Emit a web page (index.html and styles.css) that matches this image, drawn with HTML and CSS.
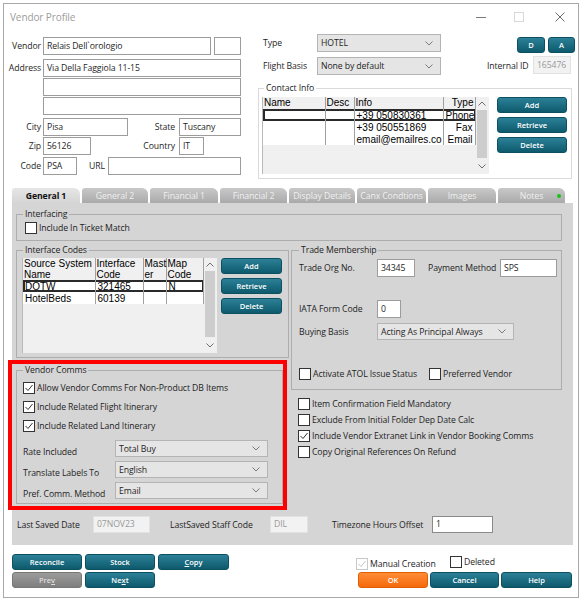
FILE: index.html
```html
<!DOCTYPE html>
<html lang="en">

<head>
  <meta charset="UTF-8">
  <meta name="viewport" content="width=device-width, initial-scale=1.0">
  <title>Vendor Profile</title>
  <link rel="stylesheet" href="styles.css">
</head>

<body>

  <div class="window">

    <!-- title bar -->
    <div class="titlebar">
      <span class="titlebar__text">Vendor Profile</span>
      <div class="titlebar__controls">
        <svg class="ctl ctl--min" width="10" height="10" viewBox="0 0 10 10"><path d="M0 5.5H10" stroke="#7a7a7a" /></svg>
        <svg class="ctl ctl--max" width="10" height="10" viewBox="0 0 10 10"><rect x="0.5" y="0.5" width="9" height="9" fill="none" stroke="#d8d8d8" /></svg>
        <svg class="ctl ctl--close" width="10" height="10" viewBox="0 0 10 10"><path d="M0.5 0.5L9.5 9.5M9.5 0.5L0.5 9.5" stroke="#6a6a6a" /></svg>
      </div>
    </div>

    <!-- vendor details -->
    <div class="header">
      <div class="address">
        <div class="row">
          <span class="lbl">Vendor</span>
          <span class="field vendor-name">Relais Dell`orologio</span>
          <span class="field vendor-suffix"></span>
        </div>
        <div class="row row--address">
          <span class="lbl">Address</span>
          <span class="field address-line">Via Della Faggiola 11-15</span>
        </div>
        <div class="row row--tight">
          <span class="lbl"></span>
          <span class="field address-line"></span>
        </div>
        <div class="row row--tight">
          <span class="lbl"></span>
          <span class="field address-line"></span>
        </div>
        <div class="row row--city">
          <span class="lbl">City</span>
          <span class="field city">Pisa</span>
          <span class="lbl-inline state-lbl">State</span>
          <span class="field state">Tuscany</span>
        </div>
        <div class="row row--tight">
          <span class="lbl">Zip</span>
          <span class="field zip">56126</span>
          <span class="lbl-inline country-lbl">Country</span>
          <span class="field country">IT</span>
        </div>
        <div class="row row--code">
          <span class="lbl">Code</span>
          <span class="field code">PSA</span>
          <span class="lbl-inline url-lbl">URL</span>
          <span class="field url"></span>
        </div>
      </div>

      <div class="type-col">
        <div class="row">
          <span class="lbl-type">Type</span>
          <span class="select type-select">HOTEL<svg width="8" height="5" viewBox="0 0 8 5"><path d="M0.5 0.5L4 4L7.5 0.5" fill="none" stroke="#7b7b7b" /></svg></span>
          <span class="btn btn--sq btn--d">D</span>
          <span class="btn btn--sq btn--a">A</span>
        </div>
        <div class="row row--flight">
          <span class="lbl-type">Flight Basis</span>
          <span class="select type-select">None by default<svg width="8" height="5" viewBox="0 0 8 5"><path d="M0.5 0.5L4 4L7.5 0.5" fill="none" stroke="#7b7b7b" /></svg></span>
          <span class="internal-lbl">Internal ID</span>
          <span class="field field--disabled internal-id">165476</span>
        </div>

        <fieldset class="group contact">
          <legend>Contact Info</legend>
          <div class="group__body">
            <div class="grid contact-grid">
              <table>
                <colgroup><col style="width:62px"><col style="width:29px"><col style="width:89px"><col style="width:32px"></colgroup>
                <thead>
                  <tr><th>Name</th><th>Desc</th><th>Info</th><th class="num">Type</th></tr>
                </thead>
                <tbody>
                  <tr class="is-selected"><td></td><td></td><td>+39 050830361</td><td class="num">Phone</td></tr>
                  <tr><td></td><td></td><td>+39 050551869</td><td class="num">Fax</td></tr>
                  <tr><td></td><td></td><td>email@emailres.co</td><td class="num">Email</td></tr>
                </tbody>
              </table>
              <div class="scrollbar">
                <svg class="scrollbar__arrow" width="8" height="5" viewBox="0 0 8 5"><path d="M0.5 4.5L4 1L7.5 4.5" fill="none" stroke="#6f6f6f" /></svg>
                <span class="scrollbar__thumb"></span>
                <svg class="scrollbar__arrow" width="8" height="5" viewBox="0 0 8 5"><path d="M0.5 0.5L4 4L7.5 0.5" fill="none" stroke="#6f6f6f" /></svg>
              </div>
            </div>
            <div class="btn-stack">
              <span class="btn">Add</span>
              <span class="btn">Retrieve</span>
              <span class="btn">Delete</span>
            </div>
          </div>
        </fieldset>
      </div>
    </div>

    <!-- tabs -->
    <div class="tabs">
      <span class="tab tab--active">General 1</span>
      <span class="tab">General 2</span>
      <span class="tab">Financial 1</span>
      <span class="tab">Financial 2</span>
      <span class="tab">Display Details</span>
      <span class="tab">Canx Condtions</span>
      <span class="tab">Images</span>
      <span class="tab">Notes<span class="tab__dot"></span></span>
    </div>

    <div class="panel">
      <fieldset class="group interfacing">
        <legend>Interfacing</legend>
        <div class="check"><span class="check__box"></span>Include In Ticket Match</div>
      </fieldset>

      <div class="panel__mid">
        <div class="panel__left">
          <fieldset class="group codes">
            <legend>Interface Codes</legend>
            <div class="group__body">
              <div class="grid codes-grid">
                <table>
                  <colgroup><col style="width:72px"><col style="width:48px"><col style="width:23px"><col style="width:37px"></colgroup>
                  <thead>
                    <tr><th>Source System<br>Name</th><th>Interface<br>Code</th><th>Mast<br>er</th><th>Map<br>Code</th></tr>
                  </thead>
                  <tbody>
                    <tr class="is-selected"><td>DOTW</td><td>321465</td><td></td><td>N</td></tr>
                    <tr><td>HotelBeds</td><td>60139</td><td></td><td></td></tr>
                  </tbody>
                </table>
                <div class="scrollbar">
                  <svg class="scrollbar__arrow" width="8" height="5" viewBox="0 0 8 5"><path d="M0.5 4.5L4 1L7.5 4.5" fill="none" stroke="#6f6f6f" /></svg>
                  <span class="scrollbar__thumb"></span>
                  <svg class="scrollbar__arrow" width="8" height="5" viewBox="0 0 8 5"><path d="M0.5 0.5L4 4L7.5 0.5" fill="none" stroke="#6f6f6f" /></svg>
                </div>
              </div>
              <div class="btn-stack">
                <span class="btn">Add</span>
                <span class="btn">Retrieve</span>
                <span class="btn">Delete</span>
              </div>
            </div>
          </fieldset>

          <div class="comms-wrap">
            <fieldset class="group comms">
              <legend>Vendor Comms</legend>
              <div class="comms__checks">
                <div class="check"><span class="check__box"><svg width="10" height="10" viewBox="0 0 10 10"><path d="M1.5 5L4 7.5L8.5 2" fill="none" stroke="#333" /></svg></span>Allow Vendor Comms For Non-Product DB Items</div>
                <div class="check"><span class="check__box"><svg width="10" height="10" viewBox="0 0 10 10"><path d="M1.5 5L4 7.5L8.5 2" fill="none" stroke="#333" /></svg></span>Include Related Flight Itinerary</div>
                <div class="check"><span class="check__box"><svg width="10" height="10" viewBox="0 0 10 10"><path d="M1.5 5L4 7.5L8.5 2" fill="none" stroke="#333" /></svg></span>Include Related Land Itinerary</div>
              </div>
              <div class="comms__selects">
                <div class="select-row">
                  <span class="select-row__lbl">Rate Included</span>
                  <span class="select comms-select">Total Buy<svg width="8" height="5" viewBox="0 0 8 5"><path d="M0.5 0.5L4 4L7.5 0.5" fill="none" stroke="#7b7b7b" /></svg></span>
                </div>
                <div class="select-row">
                  <span class="select-row__lbl">Translate Labels To</span>
                  <span class="select comms-select">English<svg width="8" height="5" viewBox="0 0 8 5"><path d="M0.5 0.5L4 4L7.5 0.5" fill="none" stroke="#7b7b7b" /></svg></span>
                </div>
                <div class="select-row">
                  <span class="select-row__lbl">Pref. Comm. Method</span>
                  <span class="select comms-select">Email<svg width="8" height="5" viewBox="0 0 8 5"><path d="M0.5 0.5L4 4L7.5 0.5" fill="none" stroke="#7b7b7b" /></svg></span>
                </div>
              </div>
            </fieldset>
          </div>
        </div>

        <div class="panel__right">
          <fieldset class="group trade">
            <legend>Trade Membership</legend>
            <div class="trade__row">
              <span class="trade__lbl">Trade Org No.</span>
              <span class="field trade-org">34345</span>
              <span class="pay-lbl">Payment Method</span>
              <span class="field pay">SPS</span>
            </div>
            <div class="trade__row trade__row--iata">
              <span class="trade__lbl">IATA Form Code</span>
              <span class="field iata">0</span>
            </div>
            <div class="trade__row trade__row--basis">
              <span class="trade__lbl">Buying Basis</span>
              <span class="select basis">Acting As Principal Always<svg width="8" height="5" viewBox="0 0 8 5"><path d="M0.5 0.5L4 4L7.5 0.5" fill="none" stroke="#7b7b7b" /></svg></span>
            </div>
            <div class="trade__checks">
              <div class="check"><span class="check__box"></span>Activate ATOL Issue Status</div>
              <div class="check"><span class="check__box"></span>Preferred Vendor</div>
            </div>
          </fieldset>

          <div class="side-checks">
            <div class="check"><span class="check__box"></span>Item Confirmation Field Mandatory</div>
            <div class="check"><span class="check__box"></span>Exclude From Initial Folder Dep Date Calc</div>
            <div class="check"><span class="check__box"><svg width="10" height="10" viewBox="0 0 10 10"><path d="M1.5 5L4 7.5L8.5 2" fill="none" stroke="#333" /></svg></span>Include Vendor Extranet Link in Vendor Booking Comms</div>
            <div class="check"><span class="check__box"></span>Copy Original References On Refund</div>
          </div>
        </div>
      </div>

      <div class="panel__foot">
        <span class="saved-lbl">Last Saved Date</span>
        <span class="field field--disabled saved-date">07NOV23</span>
        <span class="staff-lbl">LastSaved Staff Code</span>
        <span class="field field--disabled staff">DIL</span>
        <span class="tz-lbl">Timezone Hours Offset</span>
        <span class="field tz">1</span>
      </div>
    </div>

    <!-- bottom buttons -->
    <div class="footer">
      <div class="footer__left">
        <span class="btn">Reconcile</span>
        <span class="btn">Stock</span>
        <span class="btn"><u>C</u>opy</span>
        <span class="btn btn--muted">Pre<u>v</u></span>
        <span class="btn">Ne<u>x</u>t</span>
      </div>
      <div class="footer__right">
        <div class="footer__checks">
          <div class="check check--manual"><span class="check__box check__box--disabled"><svg width="10" height="10" viewBox="0 0 10 10"><path d="M1.5 5L4 7.5L8.5 2" fill="none" stroke="#c4c4c4" /></svg></span>Manual Creation</div>
          <div class="check check--deleted"><span class="check__box"></span>Deleted</div>
        </div>
        <div class="footer__btns">
          <span class="btn btn--ok">OK</span>
          <span class="btn btn--cancel">Cancel</span>
          <span class="btn btn--help">Help</span>
        </div>
      </div>
    </div>

  </div>

</body>

</html>
```

FILE: styles.css
```css
:root {
  --clr-teal-top: #2b8097;
  --clr-teal-bottom: #0e5a6d;
  --clr-panel: #d5d5d5;
  --clr-line: #adadad;
  --clr-text: #1e1e1e;

  --fnt-ui: "Open Sans", "Noto Sans", sans-serif;
  --fnt-grid: "Liberation Sans", Arial, sans-serif;
}

* {
  box-sizing: border-box;
  margin: 0;
  padding: 0;
}

body {
  font-family: var(--fnt-ui);
  font-size: 8.7px;
  letter-spacing: -0.1px;
  color: var(--clr-text);
  background-color: #fff;
  white-space: nowrap;
}

.window {
  margin: 3px 0 0 3px;
  width: 576px;
  height: 595px;
  border: 1px solid #a8a8a8;
}

/* title bar */

.titlebar {
  display: flex;
  align-items: center;
  height: 26px;
  padding: 0 13px 0 6px;
}

.titlebar__text {
  font-size: 10px;
  color: #9d9d9d;
}

.titlebar__controls {
  display: flex;
  margin-left: auto;
}

.ctl--max {
  margin-left: 28px;
}

.ctl--close {
  margin-left: 31px;
}

/* common controls */

.row {
  display: flex;
  align-items: center;
  height: 18px;
}

.field {
  height: 18px;
  padding: 0 3px;
  border: 1px solid #9c9c9c;
  background-color: #fff;
  line-height: 16px;
  overflow: hidden;
  flex: none;
}

.field--disabled {
  background-color: #f2f2f2;
  border-color: #e2e2e2;
  color: #999;
}

.select {
  display: flex;
  align-items: center;
  justify-content: space-between;
  height: 18px;
  padding: 0 7px 0 3px;
  border: 1px solid #b4b4b4;
  background-color: #e5e5e5;
  flex: none;
}

.btn {
  display: flex;
  align-items: center;
  justify-content: center;
  height: 16px;
  border: 1px solid #0c5062;
  border-radius: 3px;
  background: linear-gradient(var(--clr-teal-top), var(--clr-teal-bottom));
  color: #fff;
  font-size: 7.5px;
  font-weight: 600;
  letter-spacing: 0;
  flex: none;
}

.btn--muted {
  border-color: #777;
  background: linear-gradient(#9c9c9c, #7e7e7e);
  color: #dcdcdc;
}

.btn--ok {
  border-color: #e05e00;
  background: linear-gradient(#ff8c36, #f5690b);
}

.check {
  display: flex;
  align-items: center;
  height: 12px;
}

.check__box {
  display: flex;
  align-items: center;
  justify-content: center;
  width: 12px;
  height: 12px;
  margin-right: 2px;
  border: 1px solid #333;
  background-color: #fff;
  flex: none;
}

.check__box--disabled {
  border-color: #c8c8c8;
}

.group {
  border: 1px solid var(--clr-line);
  min-width: 0;
}

.group legend {
  padding: 0 2px;
  line-height: 12px;
}

.group__body {
  display: flex;
}

/* header */

.header {
  display: flex;
  height: 158px;
}

.address {
  width: 254px;
  padding-top: 7px;
}

.lbl {
  width: 39px;
  padding-right: 2px;
  text-align: right;
  flex: none;
}

.lbl-inline {
  padding-right: 4px;
  text-align: right;
  flex: none;
}

.row--address {
  margin-top: 4px;
}

.row--tight {
  margin-top: 1px;
}

.row--city {
  margin-top: 3px;
}

.row--code {
  margin-top: 2px;
}

.vendor-name { width: 168px; }
.vendor-suffix { width: 27px; margin-left: 3px; }
.address-line { width: 198px; }
.city { width: 85px; }
.state-lbl { width: 51px; }
.state { width: 62px; }
.zip { width: 48px; }
.country-lbl { width: 88px; }
.country { width: 25px; }
.code { width: 34px; }
.url-lbl { width: 31px; padding-right: 3px; }
.url { width: 133px; }

.type-col {
  width: 317px;
  padding-top: 4px;
}

.lbl-type {
  width: 59px;
  padding-left: 5px;
  flex: none;
}

.type-select {
  width: 124px;
}

.btn--sq {
  align-self: flex-start;
  margin-top: 3px;
  width: 28px;
}

.btn--d {
  margin-left: 76px;
}

.btn--a {
  margin-left: 3px;
  width: 27px;
}

.row--flight {
  margin-top: 5px;
}

.internal-lbl {
  width: 40px;
  margin-left: 46px;
  flex: none;
}

.internal-id {
  width: 38px;
  margin: -2px 0 0 6px;
}

.contact {
  width: 314px;
  height: 97px;
  margin-top: 7px;
  padding: 3px 0 0 3px;
  border-color: #dadada;
}

.contact legend {
  margin-left: 2px;
}

/* grids */

.grid {
  display: flex;
  border-left: 1px solid #b9b9b9;
  background-color: #f0f0f0;
  font-family: var(--fnt-grid);
  font-size: 10px;
  letter-spacing: 0;
  color: #000;
}

.grid table {
  align-self: flex-start;
  border-collapse: collapse;
  table-layout: fixed;
}

.grid th {
  height: 12px;
  padding: 0 1px;
  border-right: 1px solid #a0a0a0;
  background-color: #f0f0f0;
  font-weight: 400;
  line-height: 11px;
  text-align: left;
  vertical-align: top;
}

.grid td {
  height: 12px;
  padding: 0 2px;
  border-right: 1px solid #a0a0a0;
  background-color: #fff;
  line-height: 11px;
  overflow: hidden;
}

.grid .num {
  text-align: right;
}

.grid tr.is-selected td {
  box-shadow: inset 0 2px #2a2a2a, inset 0 -2px #2a2a2a;
}

.grid tr.is-selected td:first-child {
  box-shadow: inset 0 2px #2a2a2a, inset 0 -2px #2a2a2a, inset 2px 0 #2a2a2a;
}

.grid tr.is-selected td:last-child {
  box-shadow: inset 0 2px #2a2a2a, inset 0 -2px #2a2a2a, inset -1px 0 #2a2a2a;
}

.scrollbar {
  display: flex;
  flex-direction: column;
  align-items: center;
  width: 14px;
  margin-left: auto;
  padding: 4px 0 5px;
}

.scrollbar__thumb {
  flex: 1;
  width: 10px;
  margin: 4px 0 6px;
  background-color: #cdcdcd;
}

.contact-grid {
  width: 227px;
  height: 77px;
}

.contact-grid table {
  width: 212px;
}

.btn-stack {
  display: flex;
  flex-direction: column;
  gap: 4px;
  margin-left: 8px;
}

.contact .btn {
  width: 70px;
}

/* tabs */

.tabs {
  display: flex;
  gap: 2px;
  height: 15px;
  margin-left: 8px;
}

.tab {
  position: relative;
  display: flex;
  align-items: center;
  justify-content: center;
  height: 15px;
  border-radius: 3px 6px 0 0;
  background: linear-gradient(#c8c8c8, #aaaaaa);
  color: #f0f0f0;
}

.tab:nth-child(1) { width: 68px; }
.tab:nth-child(2) { width: 66px; }
.tab:nth-child(3) { width: 68px; }
.tab:nth-child(4) { width: 67px; }
.tab:nth-child(5) { width: 66px; }
.tab:nth-child(6) { width: 69px; }
.tab:nth-child(7) { width: 68px; }
.tab:nth-child(8) { width: 67px; }

.tab--active {
  background: linear-gradient(#e6e6e6, var(--clr-panel));
  color: #111;
  font-weight: 700;
}

.tab__dot {
  position: absolute;
  right: 4px;
  top: 6px;
  width: 4px;
  height: 4px;
  border-radius: 50%;
  background-color: #17c317;
}

/* panel */

.panel {
  width: 561px;
  height: 342px;
  margin-left: 8px;
  padding-top: 5px;
  background-color: var(--clr-panel);
}

.interfacing {
  width: 546px;
  height: 33px;
  margin-left: 4px;
  padding: 2px 0 0 8px;
}

.interfacing legend {
  margin-left: -2px;
}

.panel__mid {
  display: flex;
  margin-top: 3px;
}

.panel__left {
  width: 277px;
}

.codes {
  width: 273px;
  height: 114px;
  margin-left: 4px;
  padding: 2px 0 0 5px;
}

.codes legend {
  margin-left: 1px;
}

.codes-grid {
  width: 195px;
  height: 95px;
}

.codes-grid table {
  width: 180px;
}

.codes .btn-stack {
  margin-left: 4px;
}

.codes .btn {
  width: 61px;
}

.comms-wrap {
  width: 271px;
  height: 142px;
  margin-top: 6px;
  padding-left: 4px;
  outline: 4px solid #ff0000;
}

.comms {
  width: 267px;
  height: 140px;
  padding: 6px 0 0 6px;
}

.comms__checks {
  display: flex;
  flex-direction: column;
  gap: 7px;
}

.comms__selects {
  display: flex;
  flex-direction: column;
  gap: 4px;
  margin-top: 8px;
}

.select-row {
  display: flex;
  align-items: center;
  height: 17px;
}

.select-row__lbl {
  width: 92px;
  padding-top: 6px;
  flex: none;
}

.comms-select {
  width: 153px;
  height: 17px;
}

.panel__right {
  width: 271px;
  margin-left: 2px;
}

.trade {
  width: 271px;
  height: 146px;
  padding: 3px 0 0 7px;
}

.trade__row {
  display: flex;
  align-items: center;
  height: 18px;
}

.trade__lbl {
  width: 78px;
  flex: none;
}

.trade-org { width: 38px; }
.pay-lbl { width: 72px; margin-left: 13px; flex: none; }
.pay { width: 57px; }
.iata { width: 24px; }

.trade__row--iata {
  margin-top: 23px;
}

.trade__row--basis {
  height: 17px;
  margin-top: 5px;
}

.basis {
  width: 137px;
  height: 17px;
}

.trade__checks {
  display: flex;
  margin-top: 28px;
}

.trade__checks .check:first-child {
  width: 130px;
}

.side-checks {
  display: flex;
  flex-direction: column;
  gap: 4px;
  margin: 8px 0 0 7px;
}

.panel__foot {
  display: flex;
  align-items: center;
  height: 17px;
  margin: 10px 0 0 5px;
}

.panel__foot .field {
  height: 17px;
  line-height: 15px;
}

.saved-lbl { width: 76px; flex: none; }
.saved-date { width: 57px; }
.staff-lbl { width: 100px; margin-left: 20px; flex: none; }
.staff { width: 38px; }
.tz-lbl { width: 100px; margin-left: 24px; flex: none; }
.tz { width: 61px; border-color: #8a8a8a; }

/* footer */

.footer {
  display: flex;
  margin-top: 9px;
  padding: 0 6px 0 8px;
}

.footer__left {
  display: grid;
  grid-template-columns: 70px 70px 71px;
  grid-auto-rows: 16px;
  gap: 2px 3px;
}

.footer__right {
  display: flex;
  flex-direction: column;
  gap: 2px;
  width: 216px;
  margin-left: auto;
}

.footer__checks {
  display: flex;
  align-items: center;
  height: 16px;
}

.check--manual {
  width: 94px;
  margin-top: 3px;
}

.footer__btns {
  display: flex;
  gap: 2px;
  margin-left: 2px;
}

.btn--ok { width: 70px; }
.btn--cancel { width: 69px; }
.btn--help { width: 71px; }
```
